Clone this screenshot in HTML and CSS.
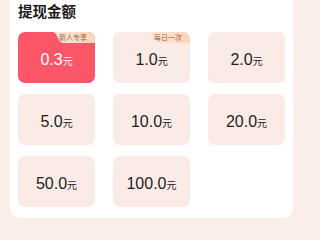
FILE: index.html
```html
<!DOCTYPE html>
<html lang="zh-CN">
<head>
<meta charset="utf-8">
<link rel="stylesheet" href="styles.css">
</head>
<body>
<section class="card">
  <h2 class="title">提现金额</h2>
  <div class="grid">
    <div class="tile active"><span class="badge">新人专享</span><span class="num">0.3</span><span class="unit">元</span></div>
    <div class="tile"><span class="badge">每日一次</span><span class="num">1.0</span><span class="unit">元</span></div>
    <div class="tile"><span class="num">2.0</span><span class="unit">元</span></div>
    <div class="tile"><span class="num">5.0</span><span class="unit">元</span></div>
    <div class="tile"><span class="num">10.0</span><span class="unit">元</span></div>
    <div class="tile"><span class="num">20.0</span><span class="unit">元</span></div>
    <div class="tile"><span class="num">50.0</span><span class="unit">元</span></div>
    <div class="tile"><span class="num">100.0</span><span class="unit">元</span></div>
  </div>
</section>
</body>
</html>
```

FILE: styles.css
```css
html, body {
  margin: 0;
  padding: 0;
  background: #fbeeea;
}
body {
  width: 302px;
  height: 229px;
  overflow: hidden;
  font-family: "Liberation Sans", "Noto Sans CJK SC", sans-serif;
}
.card {
  width: 283px;
  box-sizing: border-box;
  margin-left: 10px;
  background: #ffffff;
  border-radius: 0 0 10px 10px;
  padding: 1px 8px 11px 8px;
}
.title {
  margin: 0 0 11px 0;
  font-family: "Noto Sans CJK SC", sans-serif;
  font-size: 14.5px;
  line-height: 20px;
  font-weight: 700;
  color: #1b1b1b;
}
.grid {
  display: grid;
  grid-template-columns: repeat(3, 77px);
  grid-auto-rows: 51px;
  column-gap: 18px;
  row-gap: 11px;
}
.tile {
  position: relative;
  overflow: hidden;
  border-radius: 7px;
  background: #fbebe6;
  display: flex;
  align-items: baseline;
  justify-content: center;
  padding-top: 19px;
  box-sizing: border-box;
  color: #1e1e1e;
}
.tile.active {
  background: #fb5568;
  color: #ffffff;
}
.num {
  font-size: 16px;
  line-height: 18px;
}
.unit {
  font-family: "Noto Sans CJK SC", sans-serif;
  font-size: 10px;
  line-height: 18px;
}
.badge {
  position: absolute;
  top: 0;
  right: 0;
  width: 42px;
  height: 11px;
  box-sizing: border-box;
  padding: 0 8px 0 6px;
  font-family: "Noto Sans CJK SC", sans-serif;
  font-size: 7px;
  line-height: 11px;
  color: #a06a48;
  text-align: right;
  white-space: nowrap;
  background: linear-gradient(90deg, #fee6da, #fdd3ba);
  clip-path: path("M0 0 C4 0 5 11 10 11 L42 11 L42 0 Z");
}
```
